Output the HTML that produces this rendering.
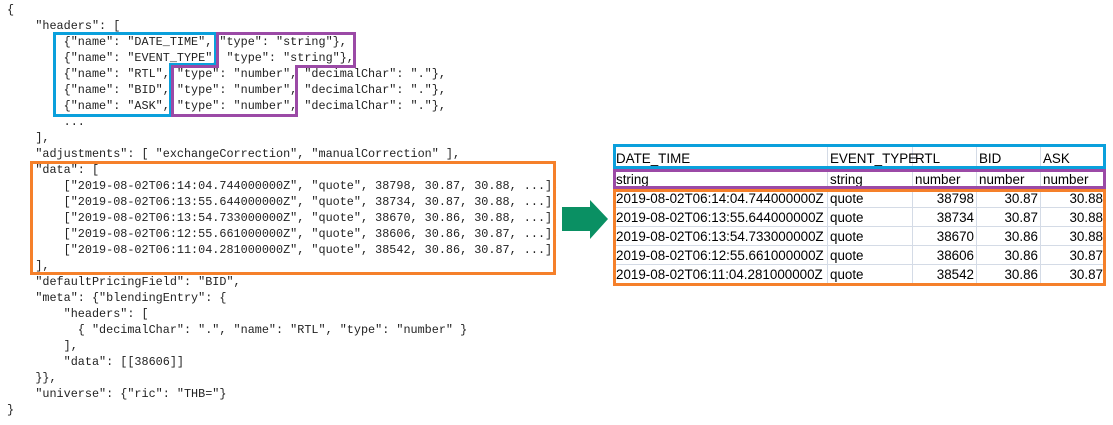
<!DOCTYPE html>
<html><head><meta charset="utf-8"><style>
body{margin:0;width:1113px;height:425px;background:#fff;position:relative;overflow:hidden}
pre{position:absolute;left:7px;top:2px;margin:0;font-family:"Liberation Mono",monospace;font-size:11.8px;line-height:16px;color:#222}
.b{position:absolute;box-sizing:border-box}
table{position:absolute;left:613px;top:146px;width:492px;table-layout:fixed;border-collapse:collapse;font-family:"Liberation Sans",sans-serif;font-size:13.4px;color:#000}
td{border:1px solid #d4dbe6;padding:0 2px;white-space:nowrap;line-height:17px}
tr.h td{height:22px}
tr.t td{height:18px}
tr.d td{height:18px}
td.r{text-align:right}
</style></head><body>
<pre>{
    "headers": [
        {"name": "DATE_TIME", "type": "string"},
        {"name": "EVENT_TYPE", "type": "string"},
        {"name": "RTL", "type": "number", "decimalChar": "."},
        {"name": "BID", "type": "number", "decimalChar": "."},
        {"name": "ASK", "type": "number", "decimalChar": "."},
        ...
    ],
    "adjustments": [ "exchangeCorrection", "manualCorrection" ],
    "data": [
        ["2019-08-02T06:14:04.744000000Z", "quote", 38798, 30.87, 30.88, ...],
        ["2019-08-02T06:13:55.644000000Z", "quote", 38734, 30.87, 30.88, ...],
        ["2019-08-02T06:13:54.733000000Z", "quote", 38670, 30.86, 30.88, ...],
        ["2019-08-02T06:12:55.661000000Z", "quote", 38606, 30.86, 30.87, ...],
        ["2019-08-02T06:11:04.281000000Z", "quote", 38542, 30.86, 30.87, ...]
    ],
    "defaultPricingField": "BID",
    "meta": {"blendingEntry": {
        "headers": [
          { "decimalChar": ".", "name": "RTL", "type": "number" }
        ],
        "data": [[38606]]
    }},
    "universe": {"ric": "THB="}
}</pre>
<svg class="b" style="left:0;top:0" width="600" height="300">
<path d="M54.5 33.5H215.5V64.5H170.5V115.5H54.5Z" fill="none" stroke="#0aa0dc" stroke-width="3"/>
<path d="M217.5 33.5H354.5V66.5H296.5V115.5H172.5V66.5H217.5Z" fill="none" stroke="#9b4aa6" stroke-width="3"/>
<rect x="31.5" y="162.5" width="523" height="111" fill="none" stroke="#f5802a" stroke-width="3"/>
</svg>
<table>
<colgroup><col style="width:214px"><col style="width:85px"><col style="width:64px"><col style="width:64px"><col style="width:65px"></colgroup>
<tr class="h"><td>DATE_TIME</td><td>EVENT_TYPE</td><td>RTL</td><td>BID</td><td>ASK</td></tr>
<tr class="t"><td>string</td><td>string</td><td>number</td><td>number</td><td>number</td></tr>
<tr class="d"><td>2019-08-02T06:14:04.744000000Z</td><td>quote</td><td class="r">38798</td><td class="r">30.87</td><td class="r">30.88</td></tr>
<tr class="d"><td>2019-08-02T06:13:55.644000000Z</td><td>quote</td><td class="r">38734</td><td class="r">30.87</td><td class="r">30.88</td></tr>
<tr class="d"><td>2019-08-02T06:13:54.733000000Z</td><td>quote</td><td class="r">38670</td><td class="r">30.86</td><td class="r">30.88</td></tr>
<tr class="d"><td>2019-08-02T06:12:55.661000000Z</td><td>quote</td><td class="r">38606</td><td class="r">30.86</td><td class="r">30.87</td></tr>
<tr class="d"><td>2019-08-02T06:11:04.281000000Z</td><td>quote</td><td class="r">38542</td><td class="r">30.86</td><td class="r">30.87</td></tr>
</table>
<svg class="b" style="left:560px;top:140px" width="553" height="150">
<rect x="54.5" y="5.5" width="490" height="22" fill="none" stroke="#0aa0dc" stroke-width="3"/>
<rect x="54.5" y="30.5" width="490" height="17" fill="none" stroke="#9b4aa6" stroke-width="3"/>
<rect x="54.5" y="50.5" width="490" height="94" fill="none" stroke="#f5802a" stroke-width="3"/>
<path d="M2 67H30V60L48 79L30 99V91H2Z" fill="#0a9063"/>
</svg>
</body></html>
